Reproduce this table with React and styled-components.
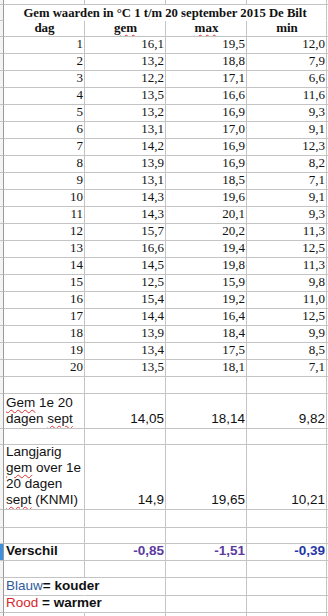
import React from 'react';
import styled, { createGlobalStyle } from 'styled-components';

const GlobalStyle = createGlobalStyle`
  html, body {
    margin: 0;
    padding: 0;
    background: #fff;
  }
`;

const days = [
  ['1', '16,1', '19,5', '12,0'],
  ['2', '13,2', '18,8', '7,9'],
  ['3', '12,2', '17,1', '6,6'],
  ['4', '13,5', '16,6', '11,6'],
  ['5', '13,2', '16,9', '9,3'],
  ['6', '13,1', '17,0', '9,1'],
  ['7', '14,2', '16,9', '12,3'],
  ['8', '13,9', '16,9', '8,2'],
  ['9', '13,1', '18,5', '7,1'],
  ['10', '14,3', '19,6', '9,1'],
  ['11', '14,3', '20,1', '9,3'],
  ['12', '15,7', '20,2', '11,3'],
  ['13', '16,6', '19,4', '12,5'],
  ['14', '14,5', '19,8', '11,3'],
  ['15', '12,5', '15,9', '9,8'],
  ['16', '15,4', '19,2', '11,0'],
  ['17', '14,4', '16,4', '12,5'],
  ['18', '13,9', '18,4', '9,9'],
  ['19', '13,4', '17,5', '8,5'],
  ['20', '13,5', '18,1', '7,1'],
];

const Sheet = styled.div`
  width: 328px;
  height: 616px;
  overflow: hidden;
  display: flex;
  flex-direction: column;
  background: #fff;
`;

const Row = styled.div`
  display: grid;
  grid-template-columns: 4px 81px 81px 81px 80px 1fr;
  height: ${(p) => p.$h}px;
  flex: none;
`;

const Cell = styled.div`
  box-sizing: border-box;
  border-right: 1px solid ${(p) => (p.$open ? 'transparent' : '#c4c4c4')};
  border-bottom: 1px solid ${(p) => (p.$flat ? 'transparent' : '#c4c4c4')};
  display: flex;
  align-items: flex-end;
  justify-content: ${(p) => p.$align || 'flex-end'};
  padding: 0 1px 0 2px;
  overflow: ${(p) => (p.$spill ? 'visible' : 'hidden')};
  white-space: nowrap;
  color: #111;
  font-family: ${(p) => (p.$serif ? '"Liberation Serif", "Times New Roman", serif' : '"Liberation Sans", Arial, sans-serif')};
  font-size: ${(p) => (p.$serif ? 13 : 13.5)}px;
  line-height: 16px;
  font-weight: ${(p) => (p.$bold ? 700 : 400)};
`;

const Stub = styled.div`
  box-sizing: border-box;
  border-right: 1px solid #9a9a9a;
  border-bottom: 1px solid #c4c4c4;
  background: ${(p) => (p.$active ? '#3d8fe0' : '#f4f4f4')};
`;

const Title = styled(Cell)`
  grid-column: span 4;
  justify-content: center;
  align-items: center;
  padding: 0;
  font-size: 12.7px;
`;

const Wrap = styled.div`
  white-space: normal;
  text-align: left;
  width: 100%;
  line-height: 16px;
  padding-bottom: 1px;
`;

const Squiggle = styled.span`
  text-decoration: underline wavy #e03030;
  text-decoration-thickness: 1px;
  text-underline-offset: 2px;
`;

const Value = styled.span`
  padding-bottom: ${(p) => p.$pb ?? 0}px;
  color: ${(p) => p.$color || 'inherit'};
`;

const Tag = styled.span`
  color: ${(p) => p.$color};
  font-weight: 400;
`;

const Blank = ({ h, active }) => (
  <Row $h={h}>
    <Stub $active={active} />
    <Cell />
    <Cell />
    <Cell />
    <Cell />
    <Cell $open />
  </Row>
);

const Legend = ({ color, word, rest, h }) => (
  <Row $h={h}>
    <Stub />
    <Cell $bold $spill $open $align="flex-start">
      <Value $pb={1}><Tag $color={color}>{word}</Tag>{rest}</Value>
    </Cell>
    <Cell />
    <Cell />
    <Cell />
    <Cell $open />
  </Row>
);

export default function App() {
  return (
    <>
      <GlobalStyle />
      <Sheet>
        <Blank h={5} />
        <Row $h={16}>
          <Stub />
          <Title $serif $bold $flat>
            <span>
              <Squiggle>Gem</Squiggle> waarden in °C 1 <Squiggle>t/m</Squiggle> 20 september 2015 De Bilt
            </span>
          </Title>
          <Cell $open $flat />
        </Row>
        <Row $h={16}>
          <Stub />
          <Cell $serif $bold $align="center">dag</Cell>
          <Cell $serif $bold $align="center"><Squiggle>gem</Squiggle></Cell>
          <Cell $serif $bold $align="center"><Squiggle>max</Squiggle></Cell>
          <Cell $serif $bold $align="center">min</Cell>
          <Cell $open />
        </Row>
        {days.map((d) => (
          <Row $h={17} key={d[0]}>
            <Stub />
            {d.map((v, i) => (
              <Cell $serif key={i}><Value $pb={1}>{v}</Value></Cell>
            ))}
            <Cell $open />
          </Row>
        ))}
        <Blank h={17} />
        <Row $h={35}>
          <Stub />
          <Cell $align="flex-start">
            <Wrap><Squiggle>Gem</Squiggle> 1e 20<br />dagen <Squiggle>sept</Squiggle></Wrap>
          </Cell>
          <Cell><Value $pb={1}>14,05</Value></Cell>
          <Cell><Value $pb={1}>18,14</Value></Cell>
          <Cell><Value $pb={1}>9,82</Value></Cell>
          <Cell $open />
        </Row>
        <Blank h={16} />
        <Row $h={65}>
          <Stub />
          <Cell $align="flex-start">
            <Wrap>
              Langjarig<br /><Squiggle>gem</Squiggle> over 1e<br />20 dagen<br /><Squiggle>sept</Squiggle> (KNMI)
            </Wrap>
          </Cell>
          <Cell><Value $pb={1}>14,9</Value></Cell>
          <Cell><Value $pb={1}>19,65</Value></Cell>
          <Cell><Value $pb={1}>10,21</Value></Cell>
          <Cell $open />
        </Row>
        <Blank h={18} />
        <Blank h={16} />
        <Row $h={17}>
          <Stub $active />
          <Cell $bold $align="flex-start"><Value $pb={1}>Verschil</Value></Cell>
          <Cell $bold><Value $pb={1} $color="#5b3c9e">-0,85</Value></Cell>
          <Cell $bold><Value $pb={1} $color="#5b3c9e">-1,51</Value></Cell>
          <Cell $bold><Value $pb={1} $color="#2536a6">-0,39</Value></Cell>
          <Cell $open />
        </Row>
        <Blank h={17} />
        <Legend h={17} color="#2f5b9c" word="Blauw" rest="= kouder" />
        <Legend h={18} color="#d6282b" word="Rood" rest=" = warmer" />
        <Blank h={10} />
      </Sheet>
    </>
  );
}
